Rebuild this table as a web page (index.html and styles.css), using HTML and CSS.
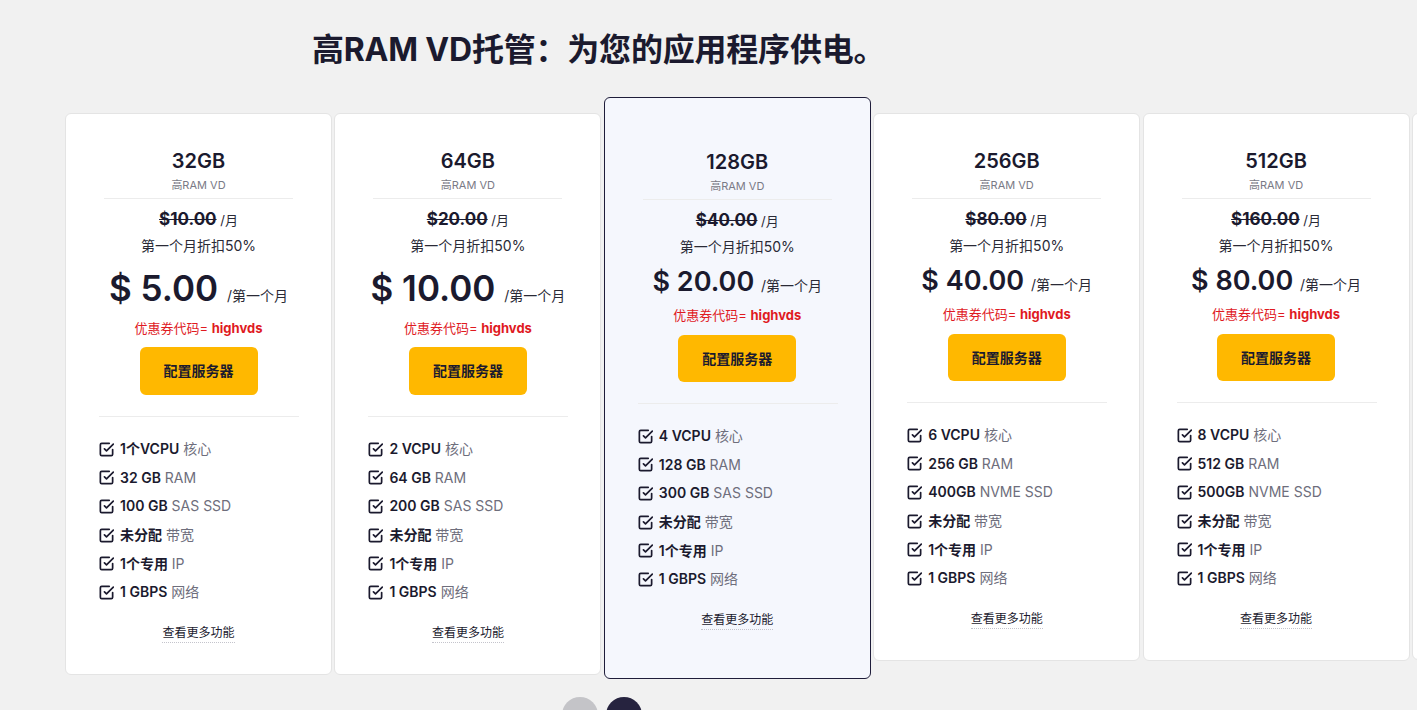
FILE: index.html
```html
<!DOCTYPE html>
<html lang="zh-CN">
  <head>
    <meta charset="UTF-8" />
    <meta name="viewport" content="width=device-width, initial-scale=1.0" />
    <title>高RAM VD托管</title>
    <link rel="stylesheet" href="styles.css">
  </head>
  <body>
    <section class="plans">
      <h1 class="plans-title">高RAM VD托管：为您的应用程序供电。</h1>

      <div class="slider">
        <div class="track">
          <!-- 32GB -->
          <div class="plan">
            <div class="plan-head">
              <h3 class="plan-name">32GB</h3>
              <p class="plan-type">高RAM VD</p>
            </div>
            <p class="old-price"><del>$10.00</del> /月</p>
            <p class="discount">第一个月折扣50%</p>
            <p class="price price-lg">$ 5.00 <span>/第一个月</span></p>
            <p class="coupon">优惠券代码= <b>highvds</b></p>
            <a class="btn-config" href="#">配置服务器</a>
            <ul class="features">
              <li><svg class="check" viewBox="1 1 22 22"><polyline points="9 11 12 14 22 4"/><path d="M21 12v7a2 2 0 0 1-2 2H5a2 2 0 0 1-2-2V5a2 2 0 0 1 2-2h11"/></svg><span><b>1个VCPU</b> 核心</span></li>
              <li><svg class="check" viewBox="1 1 22 22"><polyline points="9 11 12 14 22 4"/><path d="M21 12v7a2 2 0 0 1-2 2H5a2 2 0 0 1-2-2V5a2 2 0 0 1 2-2h11"/></svg><span><b>32 GB</b> RAM</span></li>
              <li><svg class="check" viewBox="1 1 22 22"><polyline points="9 11 12 14 22 4"/><path d="M21 12v7a2 2 0 0 1-2 2H5a2 2 0 0 1-2-2V5a2 2 0 0 1 2-2h11"/></svg><span><b>100 GB</b> SAS SSD</span></li>
              <li><svg class="check" viewBox="1 1 22 22"><polyline points="9 11 12 14 22 4"/><path d="M21 12v7a2 2 0 0 1-2 2H5a2 2 0 0 1-2-2V5a2 2 0 0 1 2-2h11"/></svg><span><b>未分配</b> 带宽</span></li>
              <li><svg class="check" viewBox="1 1 22 22"><polyline points="9 11 12 14 22 4"/><path d="M21 12v7a2 2 0 0 1-2 2H5a2 2 0 0 1-2-2V5a2 2 0 0 1 2-2h11"/></svg><span><b>1个专用</b> IP</span></li>
              <li><svg class="check" viewBox="1 1 22 22"><polyline points="9 11 12 14 22 4"/><path d="M21 12v7a2 2 0 0 1-2 2H5a2 2 0 0 1-2-2V5a2 2 0 0 1 2-2h11"/></svg><span><b>1 GBPS</b> 网络</span></li>
            </ul>
            <a class="more" href="#">查看更多功能</a>
          </div>

          <!-- 64GB -->
          <div class="plan">
            <div class="plan-head">
              <h3 class="plan-name">64GB</h3>
              <p class="plan-type">高RAM VD</p>
            </div>
            <p class="old-price"><del>$20.00</del> /月</p>
            <p class="discount">第一个月折扣50%</p>
            <p class="price price-lg">$ 10.00 <span>/第一个月</span></p>
            <p class="coupon">优惠券代码= <b>highvds</b></p>
            <a class="btn-config" href="#">配置服务器</a>
            <ul class="features">
              <li><svg class="check" viewBox="1 1 22 22"><polyline points="9 11 12 14 22 4"/><path d="M21 12v7a2 2 0 0 1-2 2H5a2 2 0 0 1-2-2V5a2 2 0 0 1 2-2h11"/></svg><span><b>2 VCPU</b> 核心</span></li>
              <li><svg class="check" viewBox="1 1 22 22"><polyline points="9 11 12 14 22 4"/><path d="M21 12v7a2 2 0 0 1-2 2H5a2 2 0 0 1-2-2V5a2 2 0 0 1 2-2h11"/></svg><span><b>64 GB</b> RAM</span></li>
              <li><svg class="check" viewBox="1 1 22 22"><polyline points="9 11 12 14 22 4"/><path d="M21 12v7a2 2 0 0 1-2 2H5a2 2 0 0 1-2-2V5a2 2 0 0 1 2-2h11"/></svg><span><b>200 GB</b> SAS SSD</span></li>
              <li><svg class="check" viewBox="1 1 22 22"><polyline points="9 11 12 14 22 4"/><path d="M21 12v7a2 2 0 0 1-2 2H5a2 2 0 0 1-2-2V5a2 2 0 0 1 2-2h11"/></svg><span><b>未分配</b> 带宽</span></li>
              <li><svg class="check" viewBox="1 1 22 22"><polyline points="9 11 12 14 22 4"/><path d="M21 12v7a2 2 0 0 1-2 2H5a2 2 0 0 1-2-2V5a2 2 0 0 1 2-2h11"/></svg><span><b>1个专用</b> IP</span></li>
              <li><svg class="check" viewBox="1 1 22 22"><polyline points="9 11 12 14 22 4"/><path d="M21 12v7a2 2 0 0 1-2 2H5a2 2 0 0 1-2-2V5a2 2 0 0 1 2-2h11"/></svg><span><b>1 GBPS</b> 网络</span></li>
            </ul>
            <a class="more" href="#">查看更多功能</a>
          </div>

          <!-- 128GB (featured) -->
          <div class="plan plan-featured">
            <div class="plan-head">
              <h3 class="plan-name">128GB</h3>
              <p class="plan-type">高RAM VD</p>
            </div>
            <p class="old-price"><del>$40.00</del> /月</p>
            <p class="discount">第一个月折扣50%</p>
            <p class="price">$ 20.00 <span>/第一个月</span></p>
            <p class="coupon">优惠券代码= <b>highvds</b></p>
            <a class="btn-config" href="#">配置服务器</a>
            <ul class="features">
              <li><svg class="check" viewBox="1 1 22 22"><polyline points="9 11 12 14 22 4"/><path d="M21 12v7a2 2 0 0 1-2 2H5a2 2 0 0 1-2-2V5a2 2 0 0 1 2-2h11"/></svg><span><b>4 VCPU</b> 核心</span></li>
              <li><svg class="check" viewBox="1 1 22 22"><polyline points="9 11 12 14 22 4"/><path d="M21 12v7a2 2 0 0 1-2 2H5a2 2 0 0 1-2-2V5a2 2 0 0 1 2-2h11"/></svg><span><b>128 GB</b> RAM</span></li>
              <li><svg class="check" viewBox="1 1 22 22"><polyline points="9 11 12 14 22 4"/><path d="M21 12v7a2 2 0 0 1-2 2H5a2 2 0 0 1-2-2V5a2 2 0 0 1 2-2h11"/></svg><span><b>300 GB</b> SAS SSD</span></li>
              <li><svg class="check" viewBox="1 1 22 22"><polyline points="9 11 12 14 22 4"/><path d="M21 12v7a2 2 0 0 1-2 2H5a2 2 0 0 1-2-2V5a2 2 0 0 1 2-2h11"/></svg><span><b>未分配</b> 带宽</span></li>
              <li><svg class="check" viewBox="1 1 22 22"><polyline points="9 11 12 14 22 4"/><path d="M21 12v7a2 2 0 0 1-2 2H5a2 2 0 0 1-2-2V5a2 2 0 0 1 2-2h11"/></svg><span><b>1个专用</b> IP</span></li>
              <li><svg class="check" viewBox="1 1 22 22"><polyline points="9 11 12 14 22 4"/><path d="M21 12v7a2 2 0 0 1-2 2H5a2 2 0 0 1-2-2V5a2 2 0 0 1 2-2h11"/></svg><span><b>1 GBPS</b> 网络</span></li>
            </ul>
            <a class="more" href="#">查看更多功能</a>
          </div>

          <!-- 256GB -->
          <div class="plan">
            <div class="plan-head">
              <h3 class="plan-name">256GB</h3>
              <p class="plan-type">高RAM VD</p>
            </div>
            <p class="old-price"><del>$80.00</del> /月</p>
            <p class="discount">第一个月折扣50%</p>
            <p class="price">$ 40.00 <span>/第一个月</span></p>
            <p class="coupon">优惠券代码= <b>highvds</b></p>
            <a class="btn-config" href="#">配置服务器</a>
            <ul class="features">
              <li><svg class="check" viewBox="1 1 22 22"><polyline points="9 11 12 14 22 4"/><path d="M21 12v7a2 2 0 0 1-2 2H5a2 2 0 0 1-2-2V5a2 2 0 0 1 2-2h11"/></svg><span><b>6 VCPU</b> 核心</span></li>
              <li><svg class="check" viewBox="1 1 22 22"><polyline points="9 11 12 14 22 4"/><path d="M21 12v7a2 2 0 0 1-2 2H5a2 2 0 0 1-2-2V5a2 2 0 0 1 2-2h11"/></svg><span><b>256 GB</b> RAM</span></li>
              <li><svg class="check" viewBox="1 1 22 22"><polyline points="9 11 12 14 22 4"/><path d="M21 12v7a2 2 0 0 1-2 2H5a2 2 0 0 1-2-2V5a2 2 0 0 1 2-2h11"/></svg><span><b>400GB</b> NVME SSD</span></li>
              <li><svg class="check" viewBox="1 1 22 22"><polyline points="9 11 12 14 22 4"/><path d="M21 12v7a2 2 0 0 1-2 2H5a2 2 0 0 1-2-2V5a2 2 0 0 1 2-2h11"/></svg><span><b>未分配</b> 带宽</span></li>
              <li><svg class="check" viewBox="1 1 22 22"><polyline points="9 11 12 14 22 4"/><path d="M21 12v7a2 2 0 0 1-2 2H5a2 2 0 0 1-2-2V5a2 2 0 0 1 2-2h11"/></svg><span><b>1个专用</b> IP</span></li>
              <li><svg class="check" viewBox="1 1 22 22"><polyline points="9 11 12 14 22 4"/><path d="M21 12v7a2 2 0 0 1-2 2H5a2 2 0 0 1-2-2V5a2 2 0 0 1 2-2h11"/></svg><span><b>1 GBPS</b> 网络</span></li>
            </ul>
            <a class="more" href="#">查看更多功能</a>
          </div>

          <!-- 512GB -->
          <div class="plan">
            <div class="plan-head">
              <h3 class="plan-name">512GB</h3>
              <p class="plan-type">高RAM VD</p>
            </div>
            <p class="old-price"><del>$160.00</del> /月</p>
            <p class="discount">第一个月折扣50%</p>
            <p class="price">$ 80.00 <span>/第一个月</span></p>
            <p class="coupon">优惠券代码= <b>highvds</b></p>
            <a class="btn-config" href="#">配置服务器</a>
            <ul class="features">
              <li><svg class="check" viewBox="1 1 22 22"><polyline points="9 11 12 14 22 4"/><path d="M21 12v7a2 2 0 0 1-2 2H5a2 2 0 0 1-2-2V5a2 2 0 0 1 2-2h11"/></svg><span><b>8 VCPU</b> 核心</span></li>
              <li><svg class="check" viewBox="1 1 22 22"><polyline points="9 11 12 14 22 4"/><path d="M21 12v7a2 2 0 0 1-2 2H5a2 2 0 0 1-2-2V5a2 2 0 0 1 2-2h11"/></svg><span><b>512 GB</b> RAM</span></li>
              <li><svg class="check" viewBox="1 1 22 22"><polyline points="9 11 12 14 22 4"/><path d="M21 12v7a2 2 0 0 1-2 2H5a2 2 0 0 1-2-2V5a2 2 0 0 1 2-2h11"/></svg><span><b>500GB</b> NVME SSD</span></li>
              <li><svg class="check" viewBox="1 1 22 22"><polyline points="9 11 12 14 22 4"/><path d="M21 12v7a2 2 0 0 1-2 2H5a2 2 0 0 1-2-2V5a2 2 0 0 1 2-2h11"/></svg><span><b>未分配</b> 带宽</span></li>
              <li><svg class="check" viewBox="1 1 22 22"><polyline points="9 11 12 14 22 4"/><path d="M21 12v7a2 2 0 0 1-2 2H5a2 2 0 0 1-2-2V5a2 2 0 0 1 2-2h11"/></svg><span><b>1个专用</b> IP</span></li>
              <li><svg class="check" viewBox="1 1 22 22"><polyline points="9 11 12 14 22 4"/><path d="M21 12v7a2 2 0 0 1-2 2H5a2 2 0 0 1-2-2V5a2 2 0 0 1 2-2h11"/></svg><span><b>1 GBPS</b> 网络</span></li>
            </ul>
            <a class="more" href="#">查看更多功能</a>
          </div>

          <!-- next slide, only its edge shows -->
          <div class="plan plan-peek"></div>
        </div>

        <div class="slider-nav">
          <button class="nav-btn nav-prev" aria-label="上一个">
            <svg viewBox="0 0 24 24"><polyline points="15 6 9 12 15 18"/></svg>
          </button>
          <button class="nav-btn nav-next" aria-label="下一个">
            <svg viewBox="0 0 24 24"><polyline points="9 6 15 12 9 18"/></svg>
          </button>
        </div>
      </div>
    </section>
  </body>
</html>
```

FILE: styles.css
```css
* {
  margin: 0;
  padding: 0;
  box-sizing: border-box;
}

body {
  font-family: Inter, "Noto Sans CJK SC", sans-serif;
  color: #1b1a2e;
  background: #f1f1f1;
  overflow: hidden;
}

/* Section title */
.plans-title {
  margin: 30px 0 27px 312px;
  font-size: 32px;
  line-height: 40px;
  font-weight: 700;
  color: #1b1a2e;
  letter-spacing: -0.2px;
}

/* Slider */
.slider {
  padding-left: 65px;
}

.track {
  display: flex;
  align-items: flex-start;
  gap: 2.4px;
}

/* Plan cards */
.plan {
  flex: 0 0 267px;
  margin-top: 16px;
  padding: 33px 0 31px;
  background: #fff;
  border: 1px solid #e4e4e4;
  border-radius: 6px;
  text-align: center;
}

.plan-featured {
  margin-top: 0;
  padding: 50px 0 48px;
  background: #f5f7fd;
  border-color: #1f1d3a;
}

.plan-peek {
  height: 547px;
}

.plan-head {
  margin: 0 38px;
  padding-bottom: 3px;
  border-bottom: 1px solid #ececec;
}

.plan-name {
  font-size: 20px;
  line-height: 28px;
  font-weight: 600;
}

.plan-type {
  font-size: 11px;
  line-height: 20px;
  color: #7a7a86;
}

.old-price {
  margin-top: 8px;
  height: 26px;
  font-size: 13px;
  line-height: 26px;
  color: #2a2a36;
}

.old-price del {
  font-size: 17px;
  line-height: 1;
  font-weight: 700;
  color: #1b1a2e;
}

.discount {
  font-size: 14px;
  line-height: 26px;
  color: #2a2a36;
}

.price {
  height: 44px;
  font-size: 27px;
  line-height: 44px;
  font-weight: 600;
  color: #1b1a2e;
}

.price-lg {
  height: 58px;
  font-size: 35px;
  line-height: 58px;
}

.price span {
  font-size: 14px;
  line-height: 1;
  font-weight: 400;
  color: #2a2a36;
}

.coupon {
  height: 22px;
  font-size: 13px;
  line-height: 22px;
  color: #e01a1f;
}

.coupon b {
  font-weight: 700;
}

.btn-config {
  display: block;
  width: 118px;
  height: 47px;
  margin: 9px auto 0;
  line-height: 47px;
  background: #ffb800;
  border-radius: 6px;
  color: #1b1a2e;
  font-size: 14px;
  font-weight: 600;
  text-decoration: none;
}

.price-lg + .coupon + .btn-config {
  margin-top: 8px;
  height: 48px;
  line-height: 48px;
}

/* Features */
.features {
  list-style: none;
  margin: 21px 32px 0 33px;
  padding-top: 18px;
  border-top: 1px solid #ececec;
  text-align: left;
}

.features li {
  display: flex;
  align-items: center;
  gap: 6px;
  height: 28.6px;
  font-size: 14px;
  line-height: 20px;
  color: #6e6e7c;
}

.features li b {
  font-weight: 600;
  color: #1b1a2e;
}

.check {
  flex: 0 0 15px;
  width: 15px;
  height: 15px;
  fill: none;
  stroke: #1b1a2e;
  stroke-width: 2.5;
  stroke-linecap: round;
  stroke-linejoin: round;
}

.more {
  display: inline-block;
  margin-top: 16px;
  font-size: 12px;
  line-height: 19px;
  color: #1b1a2e;
  text-decoration: none;
  border-bottom: 1px dotted #c4c4cc;
}

/* Slider arrows */
.slider-nav {
  display: flex;
  gap: 8px;
  margin: 18px 0 0 497px;
}

.nav-btn {
  display: flex;
  align-items: center;
  justify-content: center;
  width: 36px;
  height: 36px;
  border: none;
  border-radius: 50%;
  cursor: pointer;
}

.nav-btn svg {
  width: 16px;
  height: 16px;
  fill: none;
  stroke: #fff;
  stroke-width: 2.5;
  stroke-linecap: round;
  stroke-linejoin: round;
}

.nav-prev {
  background: #c4c4c8;
}

.nav-next {
  background: #26233f;
}
```
